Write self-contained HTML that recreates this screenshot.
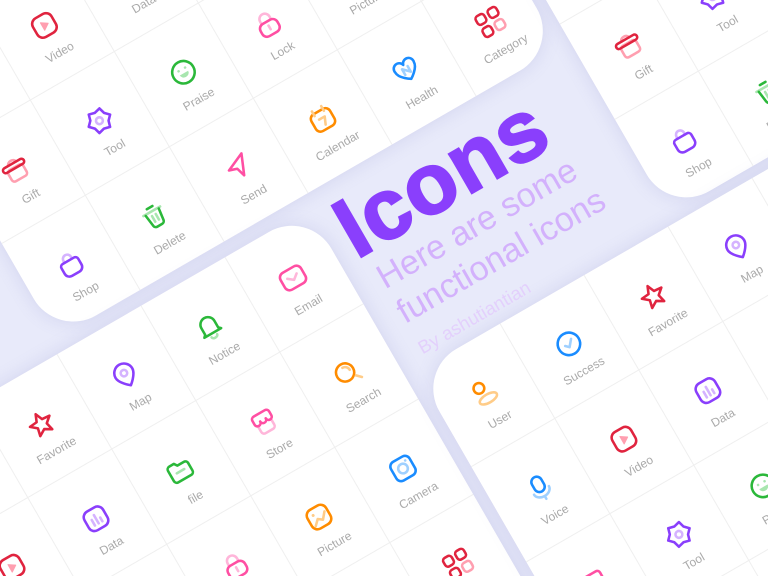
<!DOCTYPE html>
<html><head><meta charset="utf-8"><style>
html,body{margin:0;padding:0;width:768px;height:576px;overflow:hidden}
body{background:#e8eafa;font-family:"Liberation Sans",sans-serif}
#wrap{position:absolute;left:0;top:0;width:768px;height:576px;overflow:hidden;background:#e8eafa}
#f{position:absolute;left:125px;top:375px;width:0;height:0;transform:rotate(-30deg);transform-origin:0 0}
.card{position:absolute;background-color:#fff;border-radius:46px;overflow:hidden;box-shadow:0 0 18px rgba(110,110,190,.18);
background-image:linear-gradient(to right,transparent 96px,#efefef 96px),linear-gradient(to bottom,transparent 109px,#efefef 109px);
background-size:97px 100%,100% 110px}
.c{position:absolute;width:97px;height:110px}
.c svg{position:absolute;left:33.5px;top:37px;width:30px;height:30px;overflow:visible}
.c span{position:absolute;left:0;width:97px;top:76px;text-align:center;font-size:12px;color:#aaa;line-height:14px}
.t{position:absolute;white-space:nowrap;line-height:1}
</style></head><body>
<div id="wrap">
<svg width="0" height="0" style="position:absolute">
<defs>
<symbol id="video" viewBox="0 0 28 28"><g fill="none" stroke-width="2.4" stroke-linecap="round" stroke-linejoin="round"><rect x="4" y="4" width="20" height="20" rx="6" stroke="#e0243f"/><path d="M12 10l6 4-6 4z" fill="#ff9fb0" stroke="#ff9fb0" stroke-width="1"/></g></symbol>
<symbol id="data" viewBox="0 0 28 28"><g fill="none" stroke-width="2.4" stroke-linecap="round"><rect x="4" y="4" width="20" height="20" rx="6" stroke="#8a3ffc"/><path d="M10 13v6M14 10v9M18 15v4" stroke="#d5b3ff"/></g></symbol>
<symbol id="lock" viewBox="0 0 28 28"><g fill="none" stroke-width="2.4" stroke-linecap="round"><path d="M9 12V9a5 5 0 0110 0v3" stroke="#ffb6da"/><rect x="5" y="12" width="18" height="13" rx="5" stroke="#ff4fa3"/><path d="M14 16v4" stroke="#ffb6da"/></g></symbol>
<symbol id="picture" viewBox="0 0 28 28"><g fill="none" stroke-width="2.4" stroke-linecap="round" stroke-linejoin="round"><rect x="4" y="4" width="20" height="20" rx="6" stroke="#ff8c00"/><path d="M7 20l5-5 4 3 5-6" stroke="#ffcc88"/><circle cx="10" cy="10" r="1.4" fill="#ffcc88" stroke="none"/></g></symbol>
<symbol id="category" viewBox="0 0 28 28"><g fill="none" stroke-width="2.4"><rect x="3" y="3" width="9" height="9" rx="3" stroke="#e0243f"/><rect x="16" y="3" width="9" height="9" rx="3" stroke="#e0243f"/><rect x="3" y="16" width="9" height="9" rx="3" stroke="#e0243f"/><rect x="16" y="16" width="9" height="9" rx="3" stroke="#ff9fb0"/></g></symbol>
<symbol id="gift" viewBox="0 0 28 28"><g fill="none" stroke-width="2.4" stroke-linecap="round"><rect x="6" y="12" width="16" height="12" rx="3" stroke="#ff9fb0"/><path d="M10 8a4 3 0 018 0" stroke="#ff9fb0"/><rect x="3" y="8" width="22" height="5" rx="2.5" stroke="#e0243f"/></g></symbol>
<symbol id="tool" viewBox="0 0 28 28"><g fill="none" stroke-width="2.4" stroke-linejoin="round"><polygon points="25.5,14 21.4,18.25 19.75,23.96 14,22.5 8.25,23.96 6.64,18.25 2.5,14 6.64,9.75 8.25,4.04 14,5.5 19.75,4.04 21.36,9.75" stroke="#8a3ffc"/><circle cx="14" cy="14" r="3.2" stroke="#d5b3ff"/></g></symbol>
<symbol id="praise" viewBox="0 0 28 28"><g fill="none" stroke-width="2.4"><circle cx="14" cy="14" r="10.5" stroke="#2bb83a"/><circle cx="10.5" cy="11" r="1.2" fill="#a8e6af" stroke="none"/><circle cx="17.5" cy="11" r="1.2" fill="#a8e6af" stroke="none"/><path d="M9.5 15h9a4.5 4 0 01-9 0z" fill="#a8e6af" stroke="none"/></g></symbol>
<symbol id="shop" viewBox="0 0 28 28"><g fill="none" stroke-width="2.4" stroke-linecap="round" stroke-linejoin="round"><path d="M10 10V8a4 4 0 018 0v2" stroke="#d5b3ff"/><path d="M8 10h12a3 3 0 013 3l0 6a5 5 0 01-5 5h-8a5 5 0 01-5-5v-6a3 3 0 013-3z" stroke="#8a3ffc"/></g></symbol>
<symbol id="delete" viewBox="0 0 28 28"><g fill="none" stroke-width="2.4" stroke-linecap="round" stroke-linejoin="round"><path d="M5 9h18" stroke="#a8e6af"/><path d="M11 5h6" stroke="#2bb83a"/><path d="M7 10l1.5 11.5a3 3 0 003 2.5h5a3 3 0 003-2.5L21 10" stroke="#2bb83a"/><path d="M12 13v6M16 13v6" stroke="#a8e6af"/></g></symbol>
<symbol id="send" viewBox="0 0 28 28"><g fill="none" stroke-width="2.4" stroke-linejoin="round"><path d="M23 4L5 12l7.5 2.5L15 23z" stroke="#ff4fa3"/></g></symbol>
<symbol id="calendar" viewBox="0 0 28 28"><g fill="none" stroke-width="2.4" stroke-linecap="round" stroke-linejoin="round"><rect x="4" y="6" width="20" height="18" rx="5" stroke="#ff8c00"/><path d="M9 3v5M19 3v5" stroke="#ffcc88"/><path d="M11 13h6l-3 7" stroke="#ffcc88"/></g></symbol>
<symbol id="health" viewBox="0 0 28 28"><g fill="none" stroke-width="2.4" stroke-linecap="round" stroke-linejoin="round"><path d="M14 23S4 17 4 10.5A5 5 0 0114 8a5 5 0 0110 2.5C24 17 14 23 14 23z" stroke="#1a8cff"/><path d="M11 17v-6l6 6v-6" stroke="#9fd0ff"/></g></symbol>
<symbol id="favorite" viewBox="0 0 28 28"><polygon points="14,4 16.94,10.95 24.46,11.6 18.76,16.55 20.47,23.9 14,20 7.53,23.9 9.24,16.55 3.54,11.6 11.06,10.95" fill="none" stroke="#e0243f" stroke-width="2.4" stroke-linejoin="round"/></symbol>
<symbol id="map" viewBox="0 0 28 28"><g fill="none" stroke-width="2.4"><path d="M14 25s-9-7-9-13a9 9 0 0118 0c0 6-9 13-9 13z" stroke="#8a3ffc" stroke-linejoin="round"/><circle cx="14" cy="12" r="3" stroke="#d5b3ff"/></g></symbol>
<symbol id="notice" viewBox="0 0 28 28"><g fill="none" stroke-width="2.4" stroke-linecap="round" stroke-linejoin="round"><path d="M7 19V12a7 7 0 0114 0v7l2 2H5z" stroke="#2bb83a"/><path d="M11 24a3 2 0 006 0" stroke="#a8e6af"/></g></symbol>
<symbol id="email" viewBox="0 0 28 28"><g fill="none" stroke-width="2.4" stroke-linecap="round" stroke-linejoin="round"><rect x="3" y="5" width="22" height="18" rx="5" stroke="#ff4fa3"/><path d="M9 12l5 4 5-4" stroke="#ffb6da"/></g></symbol>
<symbol id="file" viewBox="0 0 28 28"><g fill="none" stroke-width="2.4" stroke-linecap="round" stroke-linejoin="round"><path d="M4 9a3 3 0 013-3h5l2 3h7a3 3 0 013 3v8a3 3 0 01-3 3H7a3 3 0 01-3-3z" stroke="#2bb83a"/><path d="M10 15h8" stroke="#a8e6af"/></g></symbol>
<symbol id="store" viewBox="0 0 28 28"><g fill="none" stroke-width="2.4" stroke-linecap="round" stroke-linejoin="round"><path d="M7 15v6a3 3 0 003 3h8a3 3 0 003-3v-6" stroke="#ffb6da"/><path d="M5 12V8a3 3 0 013-3h12a3 3 0 013 3v4a3 3 0 01-6 0 3 3 0 01-6 0 3 3 0 01-6 0z" stroke="#ff4fa3"/></g></symbol>
<symbol id="search" viewBox="0 0 28 28"><g fill="none" stroke-width="2.4" stroke-linecap="round"><circle cx="12" cy="12" r="8.5" stroke="#ff8c00"/><path d="M12 7a5 5 0 015 5" stroke="#ffcc88"/><path d="M19.5 19.5l4 4" stroke="#ffcc88"/></g></symbol>
<symbol id="camera" viewBox="0 0 28 28"><g fill="none" stroke-width="2.4"><rect x="4" y="4" width="20" height="20" rx="5" stroke="#1a8cff"/><circle cx="14" cy="14" r="4.5" stroke="#9fd0ff"/><circle cx="19.5" cy="8.5" r="1.2" fill="#9fd0ff" stroke="none"/></g></symbol>
<symbol id="user" viewBox="0 0 28 28"><g fill="none" stroke-width="2.4"><circle cx="11" cy="8" r="5" stroke="#ff8c00"/><ellipse cx="14" cy="20.5" rx="9" ry="4" stroke="#ffcc88"/></g></symbol>
<symbol id="success" viewBox="0 0 28 28"><g fill="none" stroke-width="2.4" stroke-linecap="round" stroke-linejoin="round"><circle cx="14" cy="14" r="10.5" stroke="#1a8cff"/><path d="M10 14l3 3 5-6" stroke="#9fd0ff"/></g></symbol>
<symbol id="voice" viewBox="0 0 28 28"><g fill="none" stroke-width="2.4" stroke-linecap="round"><rect x="9" y="3" width="10" height="15" rx="5" stroke="#1a8cff"/><path d="M6 17a8 6 0 0016 0M14 23v3" stroke="#9fd0ff"/></g></symbol>
</defs></svg>

<div id="f">
<div class="card" style="left:-40.7px;top:-835px;width:581px;height:769px">
<div class="c" style="left:0;top:440px"><svg><use href="#category"/></svg><span>Category</span></div>
<div class="c" style="left:97px;top:440px"><svg><use href="#video"/></svg><span>Video</span></div>
<div class="c" style="left:194px;top:440px"><svg><use href="#data"/></svg><span>Data</span></div>
<div class="c" style="left:291px;top:440px"><svg><use href="#favorite"/></svg><span>Favorite</span></div>
<div class="c" style="left:388px;top:440px"><svg><use href="#map"/></svg><span>Map</span></div>
<div class="c" style="left:485px;top:440px"><svg><use href="#notice"/></svg><span>Notice</span></div>
<div class="c" style="left:0;top:550px"><svg><use href="#gift"/></svg><span>Gift</span></div>
<div class="c" style="left:97px;top:550px"><svg><use href="#tool"/></svg><span>Tool</span></div>
<div class="c" style="left:194px;top:550px"><svg><use href="#praise"/></svg><span>Praise</span></div>
<div class="c" style="left:291px;top:550px"><svg><use href="#lock"/></svg><span>Lock</span></div>
<div class="c" style="left:388px;top:550px"><svg><use href="#picture"/></svg><span>Picture</span></div>
<div class="c" style="left:485px;top:550px"><svg><use href="#email"/></svg><span>Email</span></div>
<div class="c" style="left:0;top:660px"><svg><use href="#shop"/></svg><span>Shop</span></div>
<div class="c" style="left:97px;top:660px"><svg><use href="#delete"/></svg><span>Delete</span></div>
<div class="c" style="left:194px;top:660px"><svg><use href="#send"/></svg><span>Send</span></div>
<div class="c" style="left:291px;top:660px"><svg><use href="#calendar"/></svg><span>Calendar</span></div>
<div class="c" style="left:388px;top:660px"><svg><use href="#health"/></svg><span>Health</span></div>
<div class="c" style="left:485px;top:660px"><svg><use href="#category"/></svg><span>Category</span></div>
</div>
<div class="card" style="left:552px;top:-636px;width:581px;height:769px">
<div class="c" style="left:0;top:440px"><svg><use href="#video"/></svg><span>Video</span></div>
<div class="c" style="left:97px;top:440px"><svg><use href="#data"/></svg><span>Data</span></div>
<div class="c" style="left:0;top:550px"><svg><use href="#gift"/></svg><span>Gift</span></div>
<div class="c" style="left:97px;top:550px"><svg><use href="#tool"/></svg><span>Tool</span></div>
<div class="c" style="left:194px;top:550px"><svg><use href="#praise"/></svg><span>Praise</span></div>
<div class="c" style="left:0;top:660px"><svg><use href="#shop"/></svg><span>Shop</span></div>
<div class="c" style="left:97px;top:660px"><svg><use href="#delete"/></svg><span>Delete</span></div>
<div class="c" style="left:194px;top:660px"><svg><use href="#send"/></svg><span>Send</span></div>
</div>
<div class="card" style="left:-533.5px;top:-52px;width:775px;height:879px">
<div class="c" style="left:291px;top:0"><svg><use href="#user"/></svg><span>User</span></div>
<div class="c" style="left:388px;top:0"><svg><use href="#favorite"/></svg><span>Favorite</span></div>
<div class="c" style="left:485px;top:0"><svg><use href="#map"/></svg><span>Map</span></div>
<div class="c" style="left:582px;top:0"><svg><use href="#notice"/></svg><span>Notice</span></div>
<div class="c" style="left:679px;top:0"><svg><use href="#email"/></svg><span>Email</span></div>
<div class="c" style="left:291px;top:110px"><svg><use href="#video"/></svg><span>Video</span></div>
<div class="c" style="left:388px;top:110px"><svg><use href="#data"/></svg><span>Data</span></div>
<div class="c" style="left:485px;top:110px"><svg><use href="#file"/></svg><span>file</span></div>
<div class="c" style="left:582px;top:110px"><svg><use href="#store"/></svg><span>Store</span></div>
<div class="c" style="left:679px;top:110px"><svg><use href="#search"/></svg><span>Search</span></div>
<div class="c" style="left:388px;top:220px"><svg><use href="#gift"/></svg><span>Gift</span></div>
<div class="c" style="left:485px;top:220px"><svg><use href="#lock"/></svg><span>Lock</span></div>
<div class="c" style="left:582px;top:220px"><svg><use href="#picture"/></svg><span>Picture</span></div>
<div class="c" style="left:679px;top:220px"><svg><use href="#camera"/></svg><span>Camera</span></div>
<div class="c" style="left:582px;top:330px"><svg><use href="#health"/></svg><span>Health</span></div>
<div class="c" style="left:679px;top:330px"><svg><use href="#category"/></svg><span>Category</span></div>
</div>
<div class="card" style="left:254px;top:143px;width:775px;height:879px">
<div class="c" style="left:0;top:0"><svg><use href="#user"/></svg><span>User</span></div>
<div class="c" style="left:97px;top:0"><svg><use href="#success"/></svg><span>Success</span></div>
<div class="c" style="left:194px;top:0"><svg><use href="#favorite"/></svg><span>Favorite</span></div>
<div class="c" style="left:291px;top:0"><svg><use href="#map"/></svg><span>Map</span></div>
<div class="c" style="left:0;top:110px"><svg><use href="#voice"/></svg><span>Voice</span></div>
<div class="c" style="left:97px;top:110px"><svg><use href="#video"/></svg><span>Video</span></div>
<div class="c" style="left:194px;top:110px"><svg><use href="#data"/></svg><span>Data</span></div>
<div class="c" style="left:291px;top:110px"><svg><use href="#file"/></svg><span>file</span></div>
<div class="c" style="left:0;top:220px"><svg><use href="#store"/></svg><span>Store</span></div>
<div class="c" style="left:97px;top:220px"><svg><use href="#tool"/></svg><span>Tool</span></div>
<div class="c" style="left:194px;top:220px"><svg><use href="#praise"/></svg><span>Praise</span></div>
</div>
<div class="t" style="left:258px;top:-56px;font-size:86px;font-weight:bold;color:#8a3ffc;letter-spacing:1px;-webkit-text-stroke:2px #8a3ffc">Icons</div>
<div class="t" style="left:268px;top:28px;font-size:34px;color:#d3b1fc">Here are some</div>
<div class="t" style="left:268px;top:68px;font-size:34px;color:#d3b1fc">functional icons</div>
<div class="t" style="left:268px;top:116px;font-size:18.5px;color:#e3d0fc">By ashutiantian</div>
</div>
</div>
</body></html>
